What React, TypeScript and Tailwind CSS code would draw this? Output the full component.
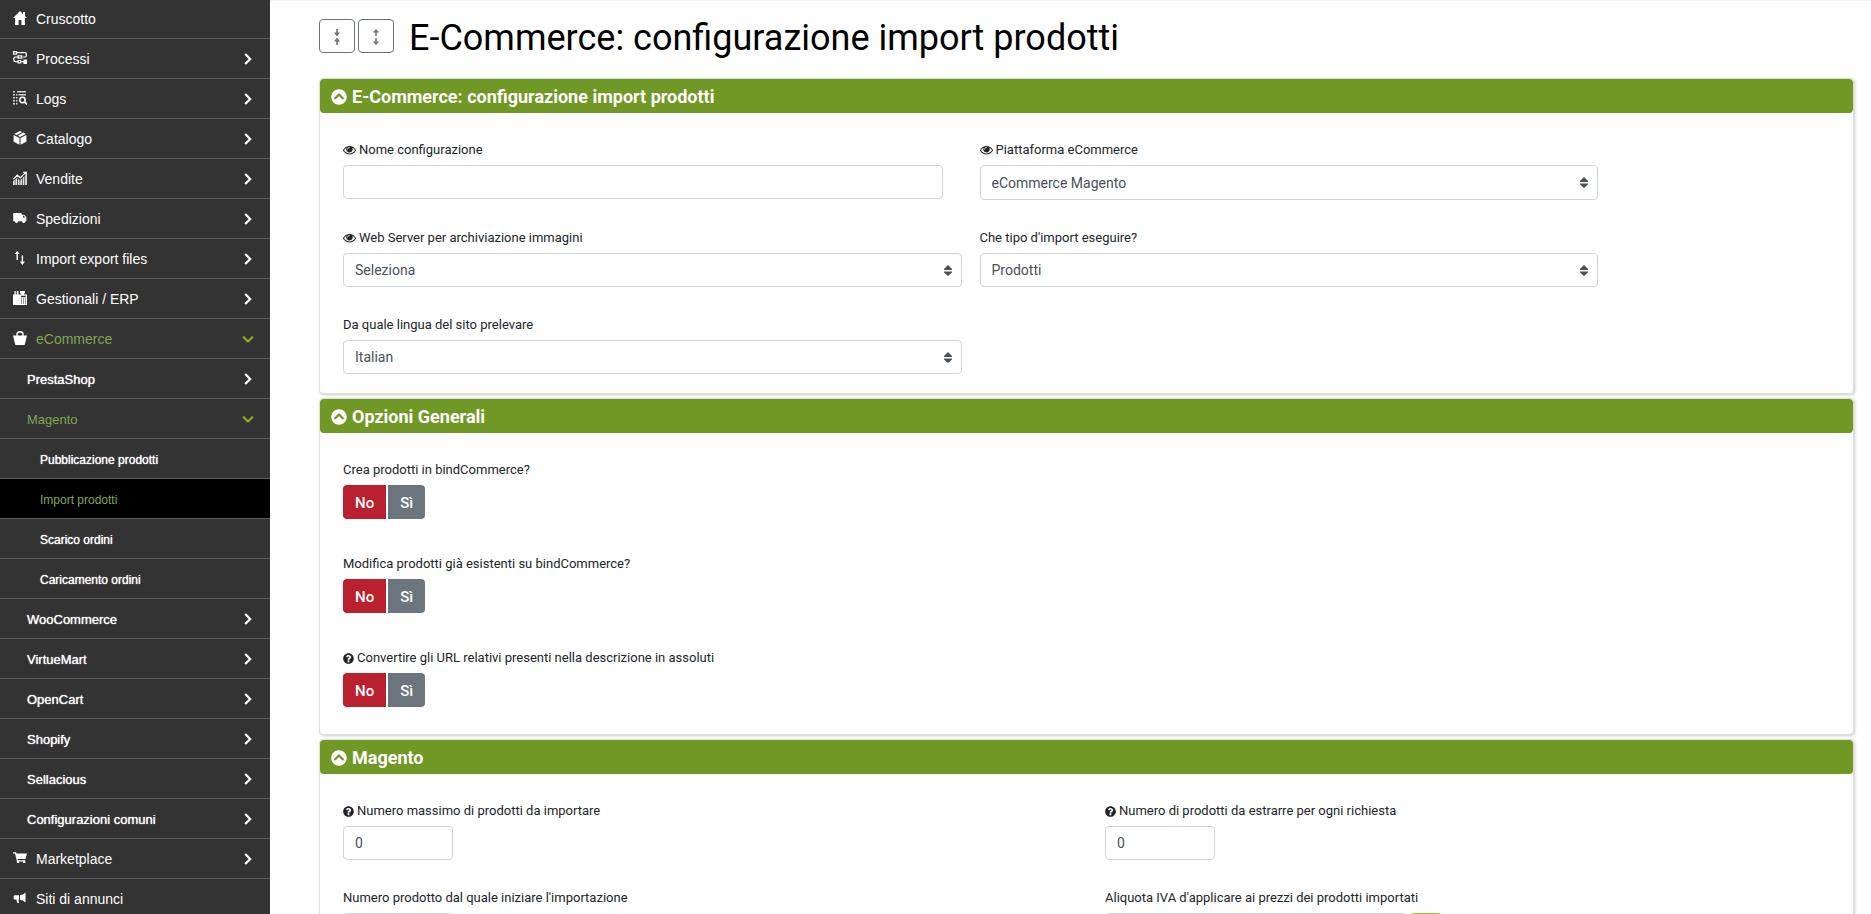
import { useId, useState } from "react";
import type { ReactNode } from "react";
import { FaChevronCircleUp, FaQuestionCircle } from "react-icons/fa";

const ICONS: Record<string, ReactNode> = {
  home: <path d="M7 0 0 7h2v7h3.600V9h2.800v5H12V7h2l-2-2V1h-2v2z" />,
  process: (
    <g fill="none" stroke="currentColor" strokeWidth="1.200">
      <path d="M.6.6h3v2.600h-3zM3.600 1.600H12q1.400 0 1.400 2.200T12 6h-2M4.500 6h-2Q.8 6 .8 8.300t1.700 2.300h2M5 4.800h3.800v2.400H5zM5 9.500h2.600v2.400H5zM7.600 10.600H11" />
      <path d="M11 9.200h2.400v3.200H11z" fill="currentColor" />
    </g>
  ),
  logs: (
    <g>
      <path
        d="M0 0h2v1.500H0zM0 3h2v1.500H0zM0 6h2v1.500H0zM0 9h2v1.500H0zM0 12h2v1.500H0zM3 3h1.500v1.500H3zM3 6h1.500v1.500H3zM3 9h1.500v1.500H3zM3 12h1.500v1.500H3zM4 0h9v1.500H4zM5.500 3H13v1.500H5.500z"
        opacity=".8"
      />
      <circle cx="9.500" cy="9" r="2.700" fill="none" stroke="currentColor" strokeWidth="1.500" />
      <path d="m11 10.500 3 3" stroke="currentColor" strokeWidth="1.700" />
    </g>
  ),
  box: (
    <path d="m7 0 2.200 1.100-5.500 3L1.200 2.900zM10.300 1.600l2.500 1.300L7 6 4.800 4.800zM.6 4l5.900 3.100v6.700L.6 10.700zM13.400 4v6.700l-5.900 3.100V7.100z" />
  ),
  chart: (
    <g>
      <path
        d="M0 10.500 1.800 8.500V14H0zM2.400 8l1.700-1.200V14H2.400zM4.900 7.500l1.700 1.700V14H4.900zM7.300 9.300 9 7.700V14H7.300zM9.700 7l1.700-2v9H9.700zM12.200 4.500 14 3v11h-1.800z"
        opacity=".85"
      />
      <path d="m.3 8.200 4-4 3 2.800 5.700-6M10.300 1.300h3v3" fill="none" stroke="currentColor" strokeWidth="1.200" />
    </g>
  ),
  truck: (
    <path d="M.8 2h7.400q.6 0 .6.700v1h2.300L13.300 6v4.300h-.9a1.700 1.700 0 0 1-3.400 0H5.200a1.700 1.700 0 0 1-3.400 0H.2V2.700Q.2 2 .8 2M10 4.800v1.700h2.300l-1.500-1.700z" />
  ),
  transfer: (
    <path d="M4.200 0 6.700 3H4.900v6H3.500V3H1.700zM8.700 4.500h1.400v6H12L9.400 14l-2.600-3.500h1.900z" />
  ),
  register: (
    <path
      fillRule="evenodd"
      d="M0 3.500h1.500V0h1.300v3.500h1V0h1.700v3.500H8V2.500H7V0h5v2.500h-1v1h3V14H0zM8 4.800v1.400h4.800V4.800zM8 7.500v1h1v-1zm2 0v1h1v-1zm2 0v1h1v-1zM8 9.500v1h1v-1zm2 0v1h1v-1zm2 0v1h1v-1zM8 11.500v1h1v-1zm2 0v1h1v-1zm2 0v1h1v-1z"
    />
  ),
  basket: (
    <g>
      <path d="M0 4.500h14L11.600 14H2.400z" />
      <path d="M4 6V3.500Q4 .8 7 .8t3 2.700V6" fill="none" stroke="currentColor" strokeWidth="1.400" />
    </g>
  ),
  cart: (
    <path d="M0 1.200h3l.5 1.200H14L12.500 8H4.600l.4 1.200h7.200v1.300H4L2 2.500H0zM3.800 10.500h2.400V12H3.800zM10 10.500h2.400V12H10z" />
  ),
  megaphone: (
    <path d="M12.500 1.500v10Q10 9 7 8.700V4.300q3-.2 5.500-2.800M1.300 4.300H6v4.300h-.6l.8 3.400H4.400l-1.100-3.400h-2Q.6 8.300.6 6.500t.7-2.200" />
  ),
};

interface MenuItem {
  label: string;
  level: 1 | 2 | 3;
  icon?: string;
  arrow?: "right" | "down";
  active?: boolean;
}

const MENU: MenuItem[] = [
  { label: "Cruscotto", level: 1, icon: "home" },
  { label: "Processi", level: 1, icon: "process", arrow: "right" },
  { label: "Logs", level: 1, icon: "logs", arrow: "right" },
  { label: "Catalogo", level: 1, icon: "box", arrow: "right" },
  { label: "Vendite", level: 1, icon: "chart", arrow: "right" },
  { label: "Spedizioni", level: 1, icon: "truck", arrow: "right" },
  { label: "Import export files", level: 1, icon: "transfer", arrow: "right" },
  { label: "Gestionali / ERP", level: 1, icon: "register", arrow: "right" },
  { label: "eCommerce", level: 1, icon: "basket", arrow: "down" },
  { label: "PrestaShop", level: 2, arrow: "right" },
  { label: "Magento", level: 2, arrow: "down" },
  { label: "Pubblicazione prodotti", level: 3 },
  { label: "Import prodotti", level: 3, active: true },
  { label: "Scarico ordini", level: 3 },
  { label: "Caricamento ordini", level: 3 },
  { label: "WooCommerce", level: 2, arrow: "right" },
  { label: "VirtueMart", level: 2, arrow: "right" },
  { label: "OpenCart", level: 2, arrow: "right" },
  { label: "Shopify", level: 2, arrow: "right" },
  { label: "Sellacious", level: 2, arrow: "right" },
  { label: "Configurazioni comuni", level: 2, arrow: "right" },
  { label: "Marketplace", level: 1, icon: "cart", arrow: "right" },
  { label: "Siti di annunci", level: 1, icon: "megaphone" },
];

const LEVEL_CLASS = {
  1: "pl-[13px] text-sm",
  2: "pl-[27px] text-[13px]",
  3: "pl-10 text-xs",
};

function SidebarRow({ item }: { item: MenuItem }) {
  const green = item.active || item.arrow === "down";
  const color = green ? "text-[#7fa650]" : "text-white";
  const sub = item.level > 1 ? "pt-0.5" : "";
  const heavy = item.level > 1 && !green ? "[text-shadow:0_0_1px_#fff]" : "";
  return (
    <li>
      <a
        href="#"
        className={`flex h-10 items-center border-b border-[#5c5c5c] pr-4 ${LEVEL_CLASS[item.level]} ${color} ${
          item.active ? "bg-black" : ""
        }`}
      >
        {item.icon && (
          <svg viewBox="0 0 14 14" className="mr-[9px] mb-0.5 size-3.5 text-white" fill="currentColor">
            {ICONS[item.icon]}
          </svg>
        )}
        <span className={`flex-1 ${sub} ${heavy}`}>{item.label}</span>
        {item.arrow === "right" && (
          <svg viewBox="0 0 12 12" className="size-3" fill="none" stroke="currentColor" strokeWidth="2.200">
            <path d="m3.200 1 5 5-5 5" />
          </svg>
        )}
        {item.arrow === "down" && (
          <svg viewBox="0 0 12 12" className="size-3 text-[#93b11b]" fill="none" stroke="currentColor" strokeWidth="2">
            <path d="m1 3.500 5 5 5-5" />
          </svg>
        )}
      </a>
    </li>
  );
}

function EyeIcon() {
  return (
    <svg viewBox="0 100 1792 1792" className="size-[13px]" fill="currentColor">
      <path d="M1664 960q-152-236-381-353 61 104 61 225 0 185-131.500 316.500t-316.500 131.500-316.500-131.500-131.500-316.500q0-121 61-225-229 117-381 353 133 205 333.500 326.500t434.500 121.500 434.500-121.500 333.500-326.500zM944 576q0-20-14-34t-34-14q-125 0-214.500 89.500t-89.500 214.500q0 20 14 34t34 14 34-14 14-34q0-86 61-147t147-61q20 0 34-14t14-34zM1792 960q0 34-20 69-140 230-376.500 368.500t-499.500 138.500-499.500-139-376.500-368q-20-35-20-69t20-69q140-229 376.500-368t499.500-139 499.500 139 376.500 368q20 35 20 69z" />
    </svg>
  );
}

interface FieldProps {
  label: string;
  hint?: "eye" | "help";
  children: (id: string) => ReactNode;
}

function Field({ label, hint, children }: FieldProps) {
  const id = useId();
  return (
    <div>
      <label htmlFor={id} className="mb-[5px] flex h-5 items-center gap-[3px] text-[13px] text-[#212529]">
        {hint === "eye" && <EyeIcon />}
        {hint === "help" && <FaQuestionCircle className="size-[11px]" />}
        {label}
      </label>
      {children(id)}
    </div>
  );
}

const CONTROL = "rounded border border-[#ced4da] bg-white px-[11px] text-sm text-[#495057] outline-none";

function SelectBox({ id, value, className = "h-[34px]" }: { id: string; value: string; className?: string }) {
  return (
    <div className="relative">
      <select id={id} className={`w-full appearance-none ${CONTROL} ${className}`}>
        <option>{value}</option>
      </select>
      <svg
        viewBox="0 0 8 11"
        className="pointer-events-none absolute top-3 right-2.5 h-[11px] w-2"
        fill="#495057"
      >
        <path d="M4 0 0 4v1h8V4zM0 6.500h8v1L4 11 0 7.500z" />
      </svg>
    </div>
  );
}

function NumberBox({ id }: { id: string }) {
  return <input id={id} type="text" defaultValue="0" className={`block h-[34px] w-[110px] ${CONTROL}`} />;
}

function YesNo({ id }: { id: string }) {
  const [value, setValue] = useState(false);
  const base = "h-[34px] px-3 pt-0.5 text-[15px] font-medium text-white";
  return (
    <div className="flex gap-0.5">
      <button
        id={id}
        type="button"
        onClick={() => setValue(false)}
        className={`rounded-l ${base} ${value ? "bg-[#6c757d]" : "bg-[#bb202e]"}`}
      >
        No
      </button>
      <button
        type="button"
        onClick={() => setValue(true)}
        className={`rounded-r ${base} ${value ? "bg-[#6f9824]" : "bg-[#6c757d]"}`}
      >
        Sì
      </button>
    </div>
  );
}

function Panel({ title, className, children }: { title: string; className: string; children: ReactNode }) {
  const [open, setOpen] = useState(true);
  return (
    <section className="rounded border border-[#dcdfdc] bg-white shadow-[1px_1px_3px_rgba(0,0,0,0.2)]">
      <h2>
        <button
          type="button"
          onClick={() => setOpen(!open)}
          className="flex h-[34px] w-full items-center gap-[5px] rounded bg-[#6f9824] pt-px pl-[11px] text-lg font-bold text-white"
        >
          <FaChevronCircleUp className="size-4" />
          {title}
        </button>
      </h2>
      {open && <div className={`pt-[27px] pr-1 pl-[23px] ${className}`}>{children}</div>}
    </section>
  );
}

const TOOL_BUTTON =
  "flex h-[34px] w-9 items-center justify-center rounded border border-[#6c757d] pt-0.5 text-[#6c757d]";

export default function App() {
  return (
    <div className="flex h-screen overflow-hidden bg-white font-['Roboto',sans-serif]">
      <nav className="w-[270px] shrink-0 overflow-hidden bg-[#333] font-['Liberation_Sans',Arial,sans-serif]">
        <ul className="-mt-px">
          {MENU.map((item) => (
            <SidebarRow key={item.label} item={item} />
          ))}
        </ul>
      </nav>

      <main className="min-w-0 flex-1 overflow-hidden border-t border-[#f4f4f4] pt-[18px] pr-[17px] pl-[49px]">
        <header className="mb-[25px] flex h-[34px] items-center gap-[3px]">
          <button type="button" aria-label="Comprimi tutto" className={TOOL_BUTTON}>
            <svg viewBox="0 0 8 16" className="h-4 w-2" fill="currentColor">
              <path d="M3.200 0h1.600v3.500H7L4 7.500l-3-4h2.200zM4 8.500l3 4H4.800V16H3.200v-3.500H1z" />
            </svg>
          </button>
          <button type="button" aria-label="Espandi tutto" className={TOOL_BUTTON}>
            <svg viewBox="0 0 8 16" className="h-4 w-2" fill="currentColor">
              <path d="m4 0 3.200 3.500H4.800V7H3.200V3.500H.8zM3.200 9h1.600v3.500h2.400L4 16 .8 12.500h2.400z" />
            </svg>
          </button>
          <h1 className="ml-3 pt-1 text-4xl text-black">E-Commerce: configurazione import prodotti</h1>
        </header>

        <div className="flex flex-col gap-1">
          <Panel title="E-Commerce: configurazione import prodotti" className="pb-[19px]">
            <div className="grid w-10/12 grid-cols-2 gap-x-[18px] gap-y-7">
              <Field label="Nome configurazione" hint="eye">
                {(id) => <input id={id} type="text" className={`block h-[34px] w-[97%] ${CONTROL}`} />}
              </Field>
              <Field label="Piattaforma eCommerce" hint="eye">
                {(id) => <SelectBox id={id} value="eCommerce Magento" className="h-[35px]" />}
              </Field>
              <Field label="Web Server per archiviazione immagini" hint="eye">
                {(id) => <SelectBox id={id} value="Seleziona" />}
              </Field>
              <Field label="Che tipo d'import eseguire?">{(id) => <SelectBox id={id} value="Prodotti" />}</Field>
              <Field label="Da quale lingua del sito prelevare">
                {(id) => <SelectBox id={id} value="Italian" />}
              </Field>
            </div>
          </Panel>

          <Panel title="Opzioni Generali" className="pb-[27px]">
            <div className="flex flex-col gap-[35px]">
              <Field label="Crea prodotti in bindCommerce?">{(id) => <YesNo id={id} />}</Field>
              <Field label="Modifica prodotti già esistenti su bindCommerce?">{(id) => <YesNo id={id} />}</Field>
              <Field label="Convertire gli URL relativi presenti nella descrizione in assoluti" hint="help">
                {(id) => <YesNo id={id} />}
              </Field>
            </div>
          </Panel>

          <Panel title="Magento" className="pb-[19px]">
            <div className="grid grid-cols-2 gap-x-[18px] gap-y-7">
              <Field label="Numero massimo di prodotti da importare" hint="help">
                {(id) => <NumberBox id={id} />}
              </Field>
              <Field label="Numero di prodotti da estrarre per ogni richiesta" hint="help">
                {(id) => <NumberBox id={id} />}
              </Field>
              <Field label="Numero prodotto dal quale iniziare l'importazione">
                {(id) => <NumberBox id={id} />}
              </Field>
              <Field label="Aliquota IVA d'applicare ai prezzi dei prodotti importati">
                {(id) => (
                  <div className="flex gap-[3px]">
                    <div className="w-[302px]">
                      <SelectBox id={id} value="" />
                    </div>
                    <button type="button" aria-label="Aggiungi" className="h-[34px] w-8 rounded bg-[#a9c02c]" />
                  </div>
                )}
              </Field>
            </div>
          </Panel>
        </div>
      </main>
    </div>
  );
}
